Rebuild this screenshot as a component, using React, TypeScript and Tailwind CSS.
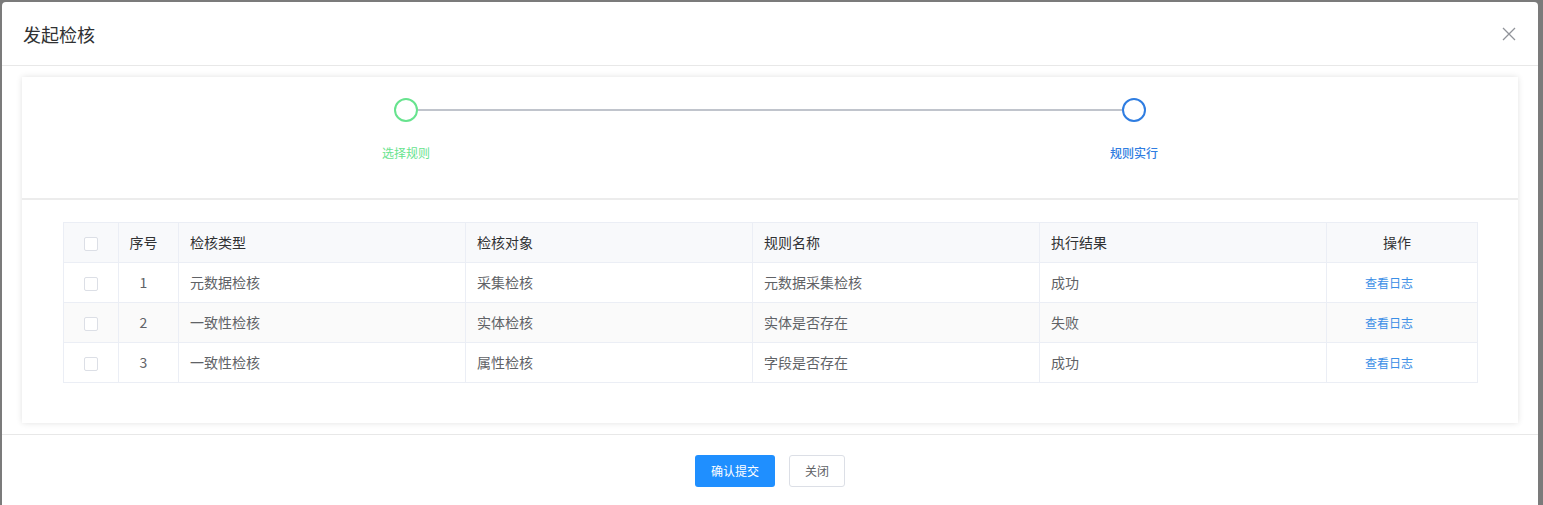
import React from 'react';

const rows = [
  { no: 1, type: '元数据检核', target: '采集检核', rule: '元数据采集检核', result: '成功' },
  { no: 2, type: '一致性检核', target: '实体检核', rule: '实体是否存在', result: '失败' },
  { no: 3, type: '一致性检核', target: '属性检核', rule: '字段是否存在', result: '成功' },
];

function Checkbox() {
  return <span className="inline-block align-middle w-[14px] h-[14px] border border-[#dcdfe6] rounded-[2px] bg-white" />;
}

export default function App() {
  return (
    <div
      className="w-full h-[505px] overflow-hidden bg-[#7b7b7b] pt-[2px] pl-[2px]"
      style={{ fontFamily: '"Noto Sans CJK SC", "Noto Sans", sans-serif' }}
    >
      <div className="w-[1536px] h-[503px] bg-white rounded-t-[4px] flex flex-col">
        {/* Header */}
        <div className="h-[64px] flex items-center justify-between pl-[21px] pr-[22px] border-b border-[#e8e8e8]">
          <span className="text-[18px] text-[#303133] leading-none">发起检核</span>
          <svg width="14" height="14" viewBox="0 0 14 14" className="text-[#909399]">
            <path d="M1 1L13 13M13 1L1 13" stroke="currentColor" strokeWidth="1.3" />
          </svg>
        </div>

        {/* Body */}
        <div className="px-[20px] pt-[11px]">
          <div className="h-[346px] bg-white shadow-[0_0_6px_rgba(0,0,0,0.12)] flex flex-col">
            {/* Steps */}
            <div className="h-[123px] border-b-2 border-[#ececec] px-[20px] pt-[21px] flex">
              <div className="relative flex-1 flex flex-col items-center">
                <div className="absolute top-[11px] left-[calc(50%+12px)] w-[calc(100%-24px)] h-[2px] bg-[#c0c4cc]" />
                <div className="w-[24px] h-[24px] rounded-full border-2 border-[#67e38e] bg-white" />
                <div className="mt-[21px] text-[12px] leading-[20px] text-[#67e38e]">选择规则</div>
              </div>
              <div className="relative flex-1 flex flex-col items-center">
                <div className="w-[24px] h-[24px] rounded-full border-2 border-[#2f7de1] bg-white" />
                <div className="mt-[21px] text-[12px] leading-[20px] text-[#2f7de1] font-medium">规则实行</div>
              </div>
            </div>

            {/* Table */}
            <div className="px-[41px] pt-[22px]">
              <table className="w-full border-collapse text-[14px] table-fixed">
                <colgroup>
                  <col className="w-[55px]" />
                  <col className="w-[60px]" />
                  <col className="w-[287px]" />
                  <col className="w-[287px]" />
                  <col className="w-[287px]" />
                  <col className="w-[287px]" />
                  <col className="w-[151px]" />
                </colgroup>
                <thead>
                  <tr className="h-[40px] bg-[#f8f9fb] text-[#303133]">
                    <th className="border border-[#ebeef5] font-normal text-center"><Checkbox /></th>
                    <th className="border border-[#ebeef5] font-normal text-center pr-[10px]">序号</th>
                    <th className="border border-[#ebeef5] font-normal text-left pl-[11px]">检核类型</th>
                    <th className="border border-[#ebeef5] font-normal text-left pl-[11px]">检核对象</th>
                    <th className="border border-[#ebeef5] font-normal text-left pl-[11px]">规则名称</th>
                    <th className="border border-[#ebeef5] font-normal text-left pl-[11px]">执行结果</th>
                    <th className="border border-[#ebeef5] font-normal text-center pr-[10px]">操作</th>
                  </tr>
                </thead>
                <tbody>
                  {rows.map((r, i) => (
                    <tr key={r.no} className={`h-[40px] text-[#606266] ${i % 2 === 1 ? 'bg-[#fafafa]' : 'bg-white'}`}>
                      <td className="border border-[#ebeef5] text-center"><Checkbox /></td>
                      <td className="border border-[#ebeef5] text-center pr-[10px]">{r.no}</td>
                      <td className="border border-[#ebeef5] pl-[11px]">{r.type}</td>
                      <td className="border border-[#ebeef5] pl-[11px]">{r.target}</td>
                      <td className="border border-[#ebeef5] pl-[11px]">{r.rule}</td>
                      <td className="border border-[#ebeef5] pl-[11px]">{r.result}</td>
                      <td className="border border-[#ebeef5] text-center pr-[26px]">
                        <a href="#" className="text-[12px] text-[#3a8ee6]">查看日志</a>
                      </td>
                    </tr>
                  ))}
                </tbody>
              </table>
            </div>
          </div>
        </div>

        {/* Footer */}
        <div className="mt-[11px] border-t border-[#e8e8e8] flex justify-center gap-[14px] pt-[20px]">
          <button className="w-[80px] h-[32px] rounded-[3px] bg-[#1f8fff] text-white text-[12px]">确认提交</button>
          <button className="w-[56px] h-[32px] rounded-[3px] border border-[#dcdfe6] bg-white text-[#606266] text-[12px]">关闭</button>
        </div>
      </div>
    </div>
  );
}
